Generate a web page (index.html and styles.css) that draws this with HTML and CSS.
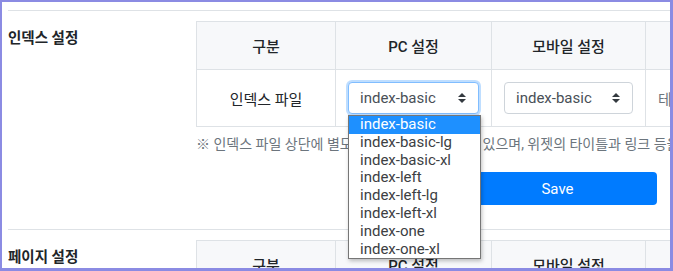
FILE: index.html
```html
<!DOCTYPE html>
<html lang="ko">
<head>
    <meta charset="UTF-8">
    <title>레이아웃 설정</title>
    <link rel="stylesheet" href="styles.css">
</head>
<body>
    <div class="frame">
        <div class="page">
            <hr class="divider">

            <!-- 인덱스 설정 -->
            <div class="setting">
                <div class="setting-label">인덱스 설정</div>
                <div class="setting-body">
                    <table class="cfg-table">
                        <thead>
                            <tr>
                                <th class="col-name">구분</th>
                                <th class="col-pc">PC 설정</th>
                                <th class="col-mobile">모바일 설정</th>
                                <th class="col-etc">테마 설정</th>
                            </tr>
                        </thead>
                        <tbody>
                            <tr>
                                <td>인덱스 파일</td>
                                <td>
                                    <div class="select focused">
                                        <span>index-basic</span>
                                        <svg class="caret" width="10" height="12" viewBox="0 0 10 12"><path d="M5 1 L9 5 H1 Z M1 7 H9 L5 11 Z" fill="#343a40"/></svg>
                                    </div>
                                </td>
                                <td>
                                    <div class="select">
                                        <span>index-basic</span>
                                        <svg class="caret" width="10" height="12" viewBox="0 0 10 12"><path d="M5 1 L9 5 H1 Z M1 7 H9 L5 11 Z" fill="#343a40"/></svg>
                                    </div>
                                </td>
                                <td class="left">테마 설정에 따름</td>
                            </tr>
                        </tbody>
                    </table>
                    <p class="note">※ 인덱스 파일 상단에 별도의 설정값을 추가할 수 있으며, 위젯의 타이틀과 링크 등을 변경할 수 있습니다.</p>
                    <div class="actions">
                        <button class="btn-save">Save</button>
                    </div>
                </div>
            </div>

            <hr class="divider">

            <!-- 페이지 설정 -->
            <div class="setting">
                <div class="setting-label">페이지 설정</div>
                <div class="setting-body">
                    <table class="cfg-table">
                        <thead>
                            <tr>
                                <th class="col-name">구분</th>
                                <th class="col-pc">PC 설정</th>
                                <th class="col-mobile">모바일 설정</th>
                                <th class="col-etc">테마 설정</th>
                            </tr>
                        </thead>
                    </table>
                </div>
            </div>
        </div>

        <ul class="dropdown">
            <li class="active">index-basic</li>
            <li>index-basic-lg</li>
            <li>index-basic-xl</li>
            <li>index-left</li>
            <li>index-left-lg</li>
            <li>index-left-xl</li>
            <li>index-one</li>
            <li>index-one-xl</li>
        </ul>
    </div>
</body>
</html>
```

FILE: styles.css
```css
body {
    margin: 0;
    font-family: Roboto, "Noto Sans CJK KR", sans-serif;
    color: #212529;
    background: #fff;
}

.frame {
    position: relative;
    width: 673px;
    height: 271px;
    box-sizing: border-box;
    border-style: solid;
    border-color: #8b8be3;
    border-width: 2px 3px 3px 2px;
    overflow: hidden;
}

.page {
    padding: 8px 0 0 6px;
    width: 900px;
}

.divider {
    margin: 0;
    border: 0;
    border-top: 1px solid #dee2e6;
}

.setting {
    display: grid;
    grid-template-columns: 188px 1fr;
    padding: 10px 0 24px;
}

.setting-label {
    font-size: 14.5px;
    font-weight: 700;
    padding-top: 5px;
}

.cfg-table {
    border-collapse: collapse;
    font-size: 15px;
    table-layout: fixed;
}

.cfg-table th,
.cfg-table td {
    border: 1px solid #dee2e6;
    padding: 12px;
    text-align: center;
    vertical-align: middle;
}

.cfg-table th {
    background: #f7f8fa;
    font-weight: 500;
    height: 23px;
}

.cfg-table td.left {
    text-align: left;
    color: #6c757d;
}

.col-name { width: 114px; }
.col-pc { width: 131px; }
.col-mobile { width: 129px; }
.col-etc { width: 200px; }

.select {
    display: flex;
    align-items: center;
    justify-content: space-between;
    height: 32px;
    box-sizing: border-box;
    padding: 0 11px;
    border: 1px solid #ced4da;
    border-radius: 4px;
    color: #495057;
    background: #fff;
    text-align: left;
}

.select.focused {
    border-color: #80bdff;
    box-shadow: 0 0 0 2px rgba(0, 123, 255, 0.25);
}

.note {
    margin: 6px 0 0;
    font-size: 14px;
    color: #6c757d;
    white-space: nowrap;
}

.actions {
    padding: 19px 0 0 262px;
}

.btn-save {
    width: 199px;
    height: 33px;
    border: none;
    border-radius: 4px;
    background: #007bff;
    color: #fff;
    font-family: Roboto, sans-serif;
    font-size: 15px;
}

.dropdown {
    position: absolute;
    left: 346px;
    top: 113px;
    width: 131px;
    margin: 0;
    padding: 0;
    list-style: none;
    background: #fff;
    border: 1px solid #767676;
    box-shadow: 1px 2px 4px rgba(0, 0, 0, 0.25);
    font-size: 15px;
    color: #3c4043;
}

.dropdown li {
    height: 17.8px;
    line-height: 17.8px;
    padding-left: 11px;
}

.dropdown li.active {
    background: #1e90ff;
    color: #fff;
}
```
